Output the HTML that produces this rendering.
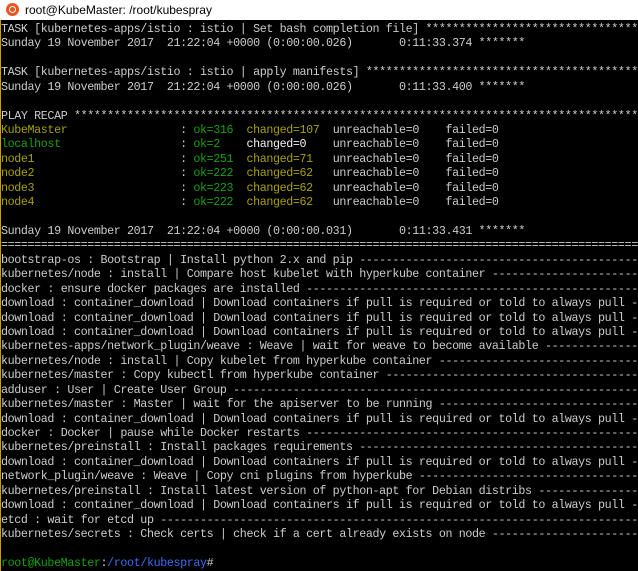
<!DOCTYPE html>
<html><head><style>
html,body{margin:0;padding:0;width:638px;height:571px;overflow:hidden;background:#000}
.title{position:absolute;left:0;top:0;width:638px;height:20px;background:#fff;font:12px "Liberation Sans",sans-serif;color:#000}
.title span{position:absolute;left:25px;top:3px}
.logo{position:absolute;left:6px;top:3px;width:13px;height:13px;border-radius:50%;background:#e95420}
.logo:after{content:"";position:absolute;left:3px;top:3px;width:5px;height:5px;border:1px solid #fff;border-radius:50%}
.term{position:absolute;left:1px;top:0;width:637px;height:571px;overflow:hidden;font-family:"Liberation Mono",monospace;font-size:11.7px;letter-spacing:-0.38px;color:#ccc;white-space:pre}
.term div{position:absolute;left:0;height:15px;line-height:14.4px}
.edge{position:absolute;left:0;top:20px;width:1px;height:551px;background:#c8a000}
.o{color:#a8a000}.g{color:#13a10e}.w{color:#f2f2f2}.b{color:#3b6cf0}
</style></head><body>
<div class="title"><div class="logo"></div><span>root@KubeMaster: /root/kubespray</span></div>
<div class="edge"></div>
<div class="term">
<div style="top:22px">TASK [kubernetes-apps/istio : istio | Set bash completion file] *****************************************</div>
<div style="top:36px">Sunday 19 November 2017  21:22:04 +0000 (0:00:00.026)       0:11:33.374 *******</div>
<div style="top:65px">TASK [kubernetes-apps/istio : istio | apply manifests] *************************************************</div>
<div style="top:80px">Sunday 19 November 2017  21:22:04 +0000 (0:00:00.026)       0:11:33.400 *******</div>
<div style="top:109px">PLAY RECAP *********************************************************************************************</div>
<div style="top:123px"><span class="o">KubeMaster</span>                 : <span class="g">ok=316 </span> <span class="o">changed=107</span>  unreachable=0    failed=0</div>
<div style="top:137px"><span class="g">localhost</span>                  : <span class="g">ok=2   </span> <span class="w">changed=0</span>    unreachable=0    failed=0</div>
<div style="top:152px"><span class="o">node1</span>                      : <span class="g">ok=251 </span> <span class="o">changed=71</span>   unreachable=0    failed=0</div>
<div style="top:166px"><span class="o">node2</span>                      : <span class="g">ok=222 </span> <span class="o">changed=62</span>   unreachable=0    failed=0</div>
<div style="top:181px"><span class="o">node3</span>                      : <span class="g">ok=223 </span> <span class="o">changed=62</span>   unreachable=0    failed=0</div>
<div style="top:195px"><span class="o">node4</span>                      : <span class="g">ok=222 </span> <span class="o">changed=62</span>   unreachable=0    failed=0</div>
<div style="top:224px">Sunday 19 November 2017  21:22:04 +0000 (0:00:00.031)       0:11:33.431 *******</div>
<div style="top:238px">=========================================================================================================</div>
<div style="top:253px">bootstrap-os : Bootstrap | Install python 2.x and pip -----------------------------------------------</div>
<div style="top:267px">kubernetes/node : install | Compare host kubelet with hyperkube container ----------------------------</div>
<div style="top:282px">docker : ensure docker packages are installed -------------------------------------------------------</div>
<div style="top:296px">download : container_download | Download containers if pull is required or told to always pull -------</div>
<div style="top:311px">download : container_download | Download containers if pull is required or told to always pull -------</div>
<div style="top:325px">download : container_download | Download containers if pull is required or told to always pull -------</div>
<div style="top:339px">kubernetes-apps/network_plugin/weave : Weave | wait for weave to become available --------------------</div>
<div style="top:354px">kubernetes/node : install | Copy kubelet from hyperkube container ------------------------------------</div>
<div style="top:368px">kubernetes/master : Copy kubectl from hyperkube container --------------------------------------------</div>
<div style="top:383px">adduser : User | Create User Group ------------------------------------------------------------------</div>
<div style="top:397px">kubernetes/master : Master | wait for the apiserver to be running ------------------------------------</div>
<div style="top:412px">download : container_download | Download containers if pull is required or told to always pull -------</div>
<div style="top:426px">docker : Docker | pause while Docker restarts --------------------------------------------------------</div>
<div style="top:440px">kubernetes/preinstall : Install packages requirements ------------------------------------------------</div>
<div style="top:455px">download : container_download | Download containers if pull is required or told to always pull -------</div>
<div style="top:469px">network_plugin/weave : Weave | Copy cni plugins from hyperkube ---------------------------------------</div>
<div style="top:484px">kubernetes/preinstall : Install latest version of python-apt for Debian distribs ---------------------</div>
<div style="top:498px">download : container_download | Download containers if pull is required or told to always pull -------</div>
<div style="top:513px">etcd : wait for etcd up -----------------------------------------------------------------------------</div>
<div style="top:527px">kubernetes/secrets : Check certs | check if a cert already exists on node ----------------------------</div>
<div style="top:556px"><span class="g">root@KubeMaster</span>:<span class="b">/root/kubespray</span>#</div>
</div>
</body></html>
